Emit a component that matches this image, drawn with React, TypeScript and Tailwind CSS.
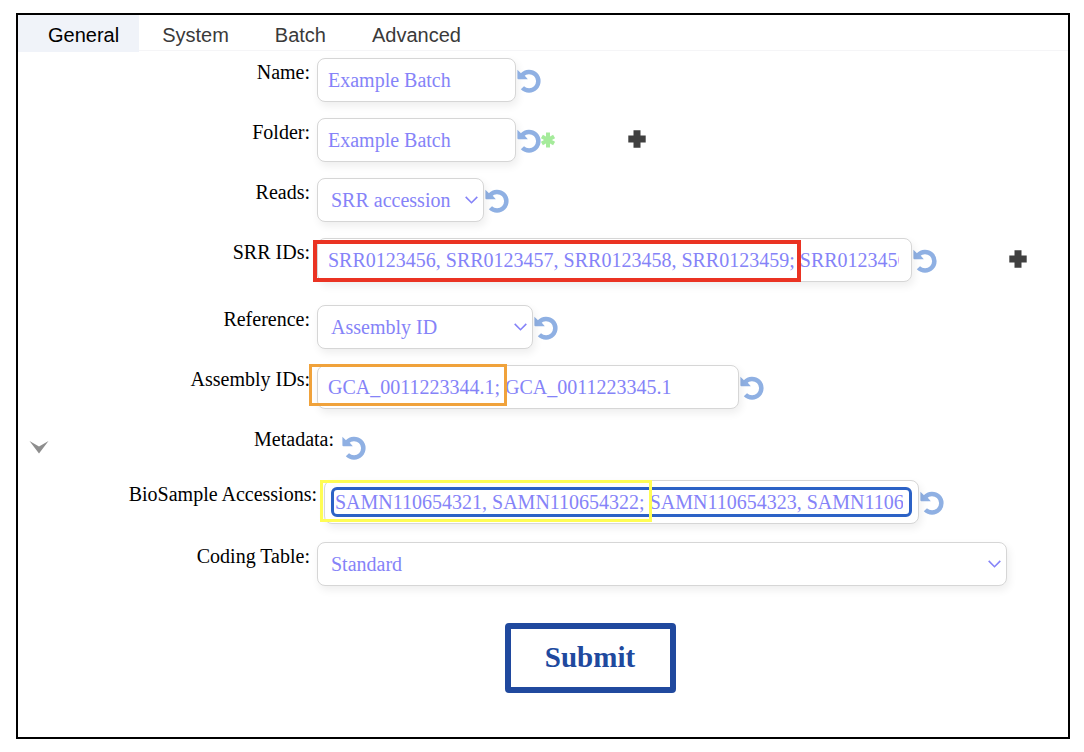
import * as React from "react";

const tabs = ["General", "System", "Batch", "Advanced"];

const fieldClass =
  "h-11 rounded-lg border border-[#d6d6d6] bg-white text-xl text-[#8583f8] shadow-[2px_4px_8px_rgba(0,0,0,0.07)] outline-none";

function ResetButton({ label }: { label: string }) {
  return (
    <button
      type="button"
      aria-label={`Reset ${label}`}
      className="mt-[11px] ml-px shrink-0 text-[#8fb0e3]"
    >
      <svg className="h-6 w-6" viewBox="0 0 24 24" fill="none">
        <path
          d="M5.2 5.9A9.3 9.3 0 1 1 5.4 18.7"
          stroke="currentColor"
          strokeWidth="4.5"
        />
        <path d="M.4.8V9.3a1 1 0 0 0 1 1H10.8L8.500 7.500 4 4.200Z" fill="currentColor" />
      </svg>
    </button>
  );
}

function AddButton({ label, className }: { label: string; className: string }) {
  return (
    <button
      type="button"
      aria-label={`Add ${label}`}
      className={`mt-3 shrink-0 text-[#404040] ${className}`}
    >
      <svg className="h-[18px] w-[18px]" viewBox="0 0 18 18">
        <path
          d="M5.500.3h7V5.500h5.200v7H12.500v5.200H5.500V12.500H.3V5.500H5.500Z"
          fill="currentColor"
        />
      </svg>
    </button>
  );
}

function Row({
  label,
  htmlFor,
  labelWidth = "w-[292px]",
  className = "",
  children,
}: {
  label: string;
  htmlFor?: string;
  labelWidth?: string;
  className?: string;
  children: React.ReactNode;
}) {
  return (
    <div className={`flex items-start ${className}`}>
      <label
        htmlFor={htmlFor}
        className={`mr-[7px] shrink-0 text-right text-xl leading-7 text-black ${labelWidth}`}
      >
        {label}
      </label>
      {children}
    </div>
  );
}

function Select({
  id,
  options,
  className,
}: {
  id: string;
  options: string[];
  className: string;
}) {
  return (
    <div className={`relative ${className}`}>
      <select
        id={id}
        className={`w-full appearance-none pl-[13px] ${fieldClass}`}
      >
        {options.map((option) => (
          <option key={option}>{option}</option>
        ))}
      </select>
      <svg
        className="pointer-events-none absolute top-[18px] right-[6px] h-2 w-[13px]"
        viewBox="0 0 13 8"
        fill="none"
        stroke="#8583f8"
        strokeWidth="1.600"
      >
        <path d="M.7.9 6.500 6.700 12.300.9" />
      </svg>
    </div>
  );
}

export default function App() {
  const [tab, setTab] = React.useState("General");

  return (
    <main className="mt-[13px] mr-[14px] mb-[13px] ml-4 border-2 border-black bg-white pb-11 font-['Liberation_Serif',serif]">
      <nav className="flex h-9 border-b border-[#f5f5f7] font-['Liberation_Sans',sans-serif] text-xl">
        {tabs.map((name) => (
          <button
            key={name}
            type="button"
            onClick={() => setTab(name)}
            className={`h-[37px] pt-[2px] first:pr-5 first:pl-[30px] not-first:px-[23px] ${
              tab === name ? "bg-[#f0f3f9] text-black" : "text-[#3a3a3a]"
            }`}
          >
            {name}
          </button>
        ))}
      </nav>

      <form className="mt-[7px]" onSubmit={(e) => e.preventDefault()}>
        <div className="flex flex-col gap-4">
          <Row label="Name:" htmlFor="name">
            <input
              id="name"
              defaultValue="Example Batch"
              className={`w-[199px] px-[10px] ${fieldClass}`}
            />
            <ResetButton label="name" />
          </Row>

          <Row label="Folder:" htmlFor="folder">
            <input
              id="folder"
              defaultValue="Example Batch"
              className={`w-[199px] px-[10px] ${fieldClass}`}
            />
            <ResetButton label="folder" />
            <svg
              className="mt-[14px] h-4 w-[14px] shrink-0"
              viewBox="0 0 14 16"
              stroke="#a5eb9b"
              strokeWidth="4"
            >
              <path d="M7 .5v15M.9 4.500l12.200 7M13.100 4.500l-12.200 7" />
            </svg>
            <AddButton label="folder" className="ml-[73px]" />
          </Row>

          <Row label="Reads:" htmlFor="reads">
            <Select
              id="reads"
              options={["SRR accession"]}
              className="w-[167px]"
            />
            <ResetButton label="reads" />
          </Row>

          <Row label="SRR IDs:" htmlFor="srr">
            <div className="relative w-[595px]">
              <input
                id="srr"
                defaultValue="SRR0123456, SRR0123457, SRR0123458, SRR0123459; SRR0123456"
                className={`w-full pr-3 pl-[10px] ${fieldClass}`}
              />
              <div className="pointer-events-none absolute top-[2px] -left-1 h-[42px] w-[488px] border-4 border-[#ea3323]" />
            </div>
            <ResetButton label="SRR IDs" />
            <AddButton label="SRR IDs" className="ml-[72px]" />
          </Row>

          <Row label="Reference:" htmlFor="reference" className="mt-[7px]">
            <Select
              id="reference"
              options={["Assembly ID"]}
              className="w-[216px]"
            />
            <ResetButton label="reference" />
          </Row>

          <Row label="Assembly IDs:" htmlFor="assembly">
            <div className="relative w-[422px]">
              <input
                id="assembly"
                defaultValue="GCA_0011223344.1; GCA_0011223345.1"
                className={`w-full px-[10px] ${fieldClass}`}
              />
              <div className="pointer-events-none absolute -top-px -left-2 h-[42px] w-[198px] border-3 border-[#f0a23b]" />
            </div>
            <ResetButton label="assembly IDs" />
          </Row>

          <div className="flex h-[39px] items-start">
            <button
              type="button"
              aria-label="Toggle metadata"
              className="mt-[15px] ml-[11px]"
            >
              <svg className="h-[14px] w-5" viewBox="0 0 20 14">
                <path d="M.5 1 10 13.500 19.500 1 10 6.500Z" fill="#8e8e8e" />
              </svg>
            </button>
            <Row label="Metadata:" labelWidth="w-[285px]">
              <ResetButton label="metadata" />
            </Row>
          </div>

          <Row
            label="BioSample Accessions:"
            htmlFor="biosample"
            labelWidth="w-[299px]"
          >
            <div className={`relative w-[595px] p-[6px] ${fieldClass}`}>
              <input
                id="biosample"
                defaultValue="SAMN110654321, SAMN110654322; SAMN110654323, SAMN110654324"
                className="block h-[30px] w-full rounded-md border-3 border-[#2c62c6] pr-[6px] pl-px outline-none"
              />
              <div className="pointer-events-none absolute -top-px -left-[5px] h-[42px] w-[332px] border-3 border-[#fffd54]" />
            </div>
            <ResetButton label="BioSample accessions" />
          </Row>

          <Row label="Coding Table:" htmlFor="coding" className="mt-[2px]">
            <Select
              id="coding"
              options={["Standard"]}
              className="mr-[61px] flex-1"
            />
          </Row>
        </div>

        <div className="mt-[37px] flex justify-center pr-[2px]">
          <button
            type="submit"
            className="ml-24 h-[70px] w-[171px] rounded-sm border-6 border-[#20499e] text-[29px] font-bold text-[#20499e]"
          >
            Submit
          </button>
        </div>
      </form>
    </main>
  );
}
